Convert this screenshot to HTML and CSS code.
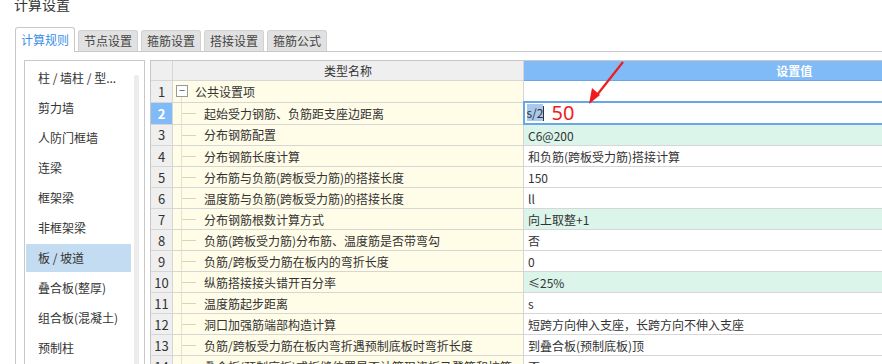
FILE: index.html
```html
<!DOCTYPE html>
<html lang="zh">
<head>
    <meta charset="UTF-8">
    <title>计算设置</title>
    <link rel="stylesheet" href="styles.css">
</head>
<body>
    <div class="title">计算设置</div>
    <div class="tabs">
        <div class="tab active">计算规则</div>
        <div class="tab">节点设置</div>
        <div class="tab">箍筋设置</div>
        <div class="tab">搭接设置</div>
        <div class="tab">箍筋公式</div>
    </div>
    <div class="panel">
        <div class="sidebar">
            <div class="item">柱 / 墙柱 / 型...</div>
            <div class="item">剪力墙</div>
            <div class="item">人防门框墙</div>
            <div class="item">连梁</div>
            <div class="item">框架梁</div>
            <div class="item">非框架梁</div>
            <div class="item selected">板 / 坡道</div>
            <div class="item">叠合板(整厚)</div>
            <div class="item">组合板(混凝土)</div>
            <div class="item">预制柱</div>
            <div class="scrollbar"></div>
        </div>
        <div class="grid">
            <table>
                <thead>
                    <tr>
                        <th class="num"></th>
                        <th class="name">类型名称</th>
                        <th class="value">设置值</th>
                    </tr>
                </thead>
                <tbody>
                    <tr>
                        <td class="num">1</td>
                        <td class="name root"><span class="toggle">−</span>公共设置项</td>
                        <td class="value"></td>
                    </tr>
                    <tr>
                        <td class="num current">2</td>
                        <td class="name child">起始受力钢筋、负筋距支座边距离</td>
                        <td class="value editing"><span class="sel">s/2</span><span class="caret"></span><span class="note">50</span></td>
                    </tr>
                    <tr>
                        <td class="num">3</td>
                        <td class="name child">分布钢筋配置</td>
                        <td class="value green">C6@200</td>
                    </tr>
                    <tr>
                        <td class="num">4</td>
                        <td class="name child">分布钢筋长度计算</td>
                        <td class="value">和负筋(跨板受力筋)搭接计算</td>
                    </tr>
                    <tr>
                        <td class="num">5</td>
                        <td class="name child">分布筋与负筋(跨板受力筋)的搭接长度</td>
                        <td class="value">150</td>
                    </tr>
                    <tr>
                        <td class="num">6</td>
                        <td class="name child">温度筋与负筋(跨板受力筋)的搭接长度</td>
                        <td class="value">ll</td>
                    </tr>
                    <tr>
                        <td class="num">7</td>
                        <td class="name child">分布钢筋根数计算方式</td>
                        <td class="value green">向上取整+1</td>
                    </tr>
                    <tr>
                        <td class="num">8</td>
                        <td class="name child">负筋(跨板受力筋)分布筋、温度筋是否带弯勾</td>
                        <td class="value">否</td>
                    </tr>
                    <tr>
                        <td class="num">9</td>
                        <td class="name child">负筋/跨板受力筋在板内的弯折长度</td>
                        <td class="value">0</td>
                    </tr>
                    <tr>
                        <td class="num">10</td>
                        <td class="name child">纵筋搭接接头错开百分率</td>
                        <td class="value green">≤25%</td>
                    </tr>
                    <tr>
                        <td class="num">11</td>
                        <td class="name child">温度筋起步距离</td>
                        <td class="value">s</td>
                    </tr>
                    <tr>
                        <td class="num">12</td>
                        <td class="name child">洞口加强筋端部构造计算</td>
                        <td class="value">短跨方向伸入支座，长跨方向不伸入支座</td>
                    </tr>
                    <tr>
                        <td class="num">13</td>
                        <td class="name child">负筋/跨板受力筋在板内弯折遇预制底板时弯折长度</td>
                        <td class="value">到叠合板(预制底板)顶</td>
                    </tr>
                    <tr>
                        <td class="num">14</td>
                        <td class="name child">叠合板(预制底板)或板缝位置是否计算现浇板马凳筋和拉筋</td>
                        <td class="value">否</td>
                    </tr>
                </tbody>
            </table>
        </div>
    </div>

    <!-- red annotation arrow -->
    <svg class="arrow" width="882" height="364" viewBox="0 0 882 364">
        <path d="M623 62 L597 95" stroke="#f01c1c" stroke-width="2.2" fill="none"/>
        <path d="M589 104 L592 88 L600 95 Z" fill="#f01c1c"/>
    </svg>
</body>
</html>
```

FILE: styles.css
```css
body {
    margin: 0;
    height: 364px;
    overflow: hidden;
    background: #fff;
    font-family: "Noto Sans CJK SC", "Noto Sans", sans-serif;
    color: #333;
    position: relative;
}
.title {
    font-size: 14px;
    line-height: 20px;
    margin: -6px 0 0 14px;
    height: 20px;
}
.tabs {
    display: flex;
    gap: 3px;
    margin: 13px 0 0 15px;
    height: 24px;
    align-items: flex-end;
}
.tab {
    height: 20px;
    padding: 0 5px;
    font-size: 12px;
    line-height: 20px;
    background: #e1e1e1;
    border: 1px solid #d2d2d2;
    border-bottom: none;
    border-radius: 3px 3px 0 0;
    color: #444;
}
.tab.active {
    height: 24px;
    line-height: 24px;
    background: #fff;
    color: #3b8fe8;
    border-color: #c8c8c8;
    margin-bottom: -1px;
    position: relative;
}
.panel {
    display: flex;
    gap: 5px;
    border-top: 1px solid #c8c8c8;
    border-left: 1px solid #c8c8c8;
    margin-left: 15px;
    padding: 8px 0 0 8px;
    height: 320px;
}
.sidebar {
    width: 118px;
    flex: none;
    border: 1px solid #c8c8c8;
    position: relative;
    padding: 2px 0 0 1px;
}
.item {
    height: 30px;
    line-height: 30px;
    font-size: 12px;
    padding-left: 12px;
    width: 93px;
    color: #333;
    white-space: nowrap;
}
.item.selected {
    background: #c4dcf1;
    height: 28px;
    line-height: 28px;
    margin: 1px 0;
}
.scrollbar {
    position: absolute;
    left: 109px;
    top: 14px;
    width: 5px;
    bottom: 0;
    background: #ececec;
    border-radius: 2px;
}
.grid {
    flex: 1;
    overflow: hidden;
    border-left: 1px solid #c8c8c8;
    border-top: 1px solid #c8c8c8;
}
table {
    border-collapse: collapse;
    table-layout: fixed;
    width: 915px;
    font-size: 12px;
}
th, td {
    border: 1px solid #d6d6d6;
    height: 20px;
    padding: 0;
    white-space: nowrap;
    overflow: hidden;
}
th {
    font-weight: normal;
    background: #efefef;
    color: #333;
    border-top: none;
    height: 19px;
}
th.num {
    width: 21px;
    border-left: none;
}
th.name {
    width: 350px;
}
th.value {
    background: #80bbf7;
    color: #fff;
    font-weight: bold;
    border-color: #6aa6e6;
    text-align: center;
}
td.num {
    background: #efefef;
    text-align: center;
    border-left: none;
    color: #333;
    font-size: 13px;
}
td.num.current {
    background: #80bbf7;
    color: #fff;
    font-weight: bold;
}
td.name {
    background: #fffce8;
    position: relative;
}
td.root {
    padding-left: 22px;
}
td.child {
    padding-left: 31px;
}
td.name::before {
    content: "";
    position: absolute;
    left: 8px;
    top: 0;
    bottom: 0;
    border-left: 1px solid #e6e2cf;
}
td.root::before {
    top: 16px;
}
td.child::after {
    content: "";
    position: absolute;
    left: 9px;
    width: 14px;
    top: 10px;
    border-top: 1px solid #d8d4c2;
}
.toggle {
    position: absolute;
    left: 3px;
    top: 4px;
    width: 10px;
    height: 10px;
    border: 1px solid #999;
    background: #fff;
    font-size: 11px;
    line-height: 9px;
    text-align: center;
    color: #555;
    z-index: 1;
}
td.value {
    background: #fff;
    padding-left: 4px;
    border-color: #d6d6d6;
}
td.value.green {
    background: #dcf5eb;
}
td.value.editing {
    border: 2px solid #6aa6e6;
    padding-left: 2px;
    position: relative;
}
.sel {
    background: #a9c8ee;
    color: #333;
}
.caret {
    display: inline-block;
    width: 1px;
    height: 15px;
    background: #333;
    vertical-align: -3px;
}
.note {
    color: #f01c1c;
    font-size: 20px;
    line-height: 18px;
    margin-left: 7px;
    font-family: "Noto Sans", sans-serif;
    vertical-align: -2px;
}
.arrow {
    position: absolute;
    left: 0;
    top: 0;
    pointer-events: none;
}
```
